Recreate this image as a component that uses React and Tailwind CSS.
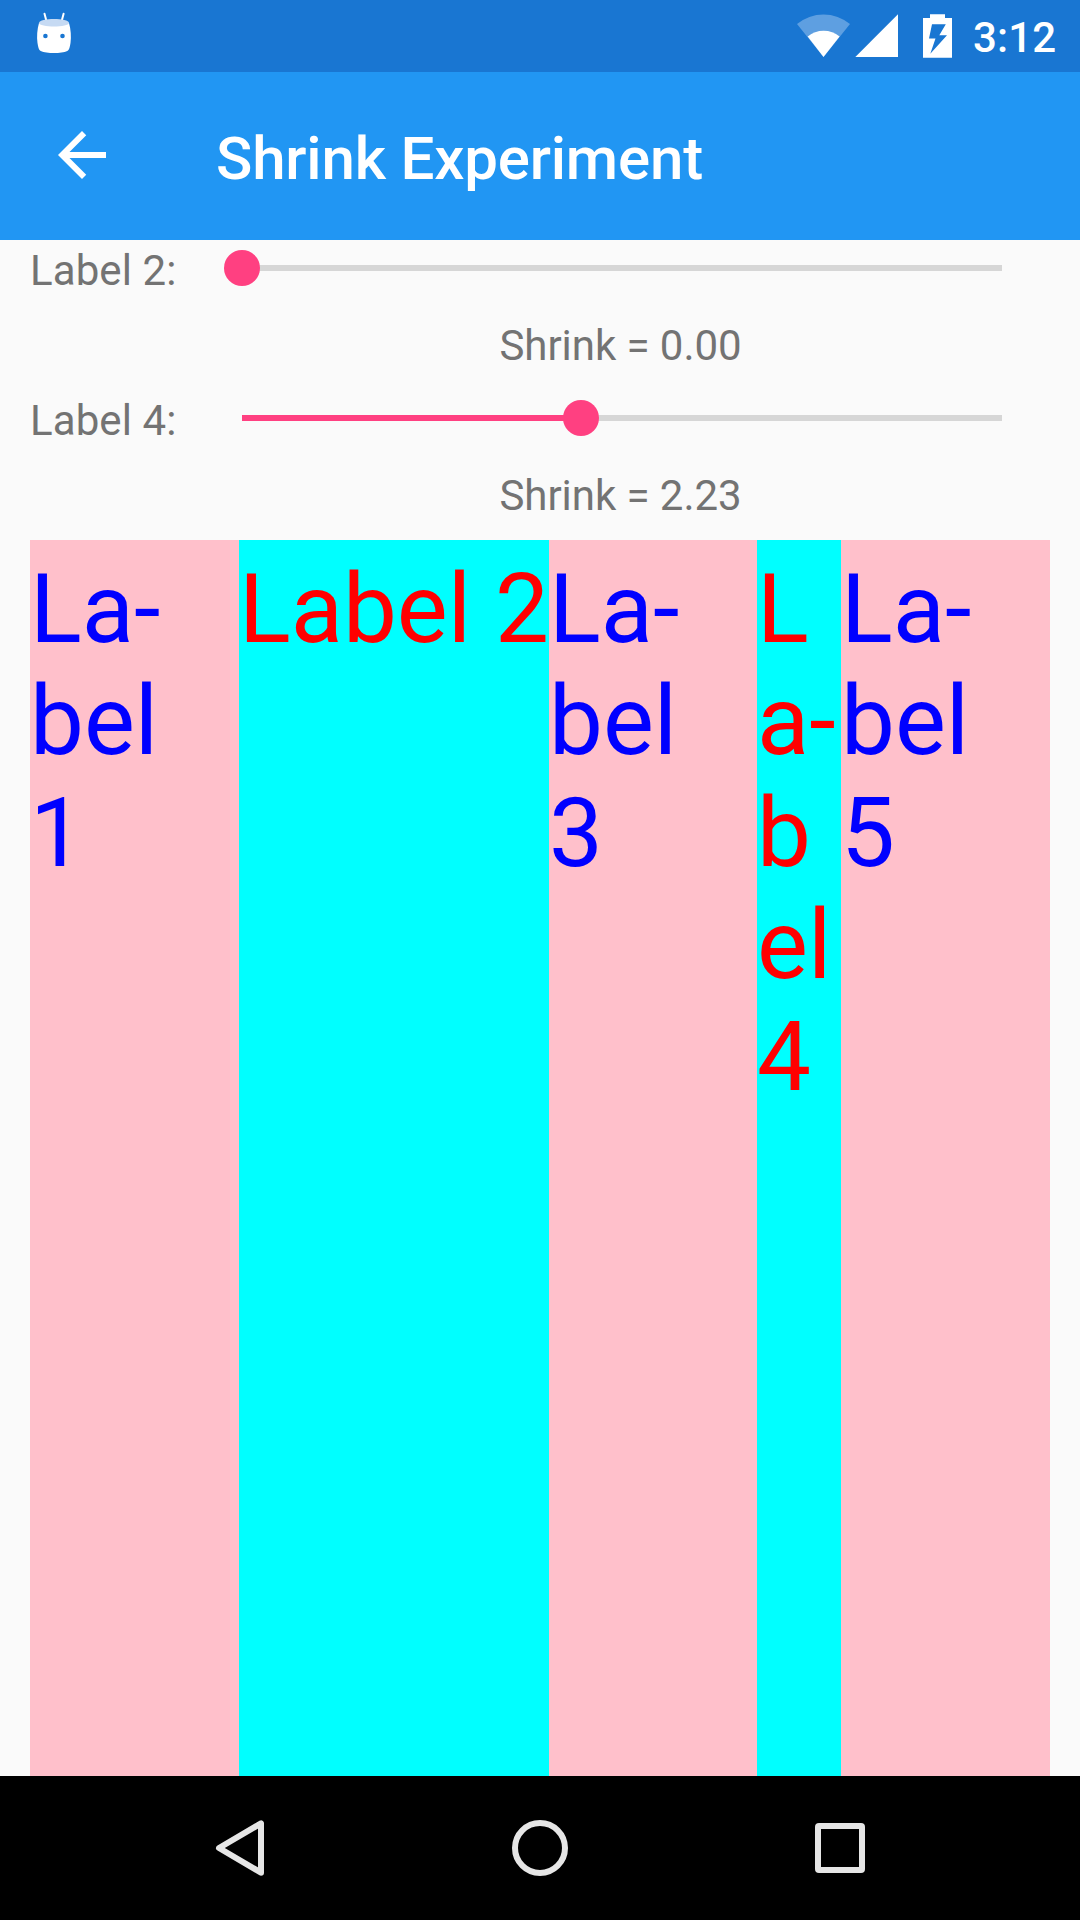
function StatusBar() {
  return (
    <div className="flex h-[72px] items-start justify-between bg-[#1976d2] pr-[27px]">
      <svg className="h-[72px] w-[108px]" viewBox="0 0 108 72" aria-hidden="true">
        <path d="M44.5 13.700l2 7.500M63.600 13.700l-2 7.500" stroke="#fff" strokeWidth="2" strokeLinecap="round" />
        <path
          d="M39 23C37.2 29 36.6 37 37.5 43c.6 4 1.3 7 3.2 8 6 2.700 20.600 2.700 26.600 0 1.900-1 2.600-4 3.200-8 .900-6 .300-14-1.500-20Z"
          fill="#fff"
        />
        <path d="M39 23c0-5.200 30-5.200 30 0 0 4.600-30 4.600-30 0Z" fill="#c6daf3" />
        <circle cx="45.4" cy="36" r="2.3" fill="#1976d2" />
        <circle cx="62.5" cy="36" r="2.3" fill="#1976d2" />
      </svg>
      <div className="flex">
        <svg className="h-[72px] w-[180px]" viewBox="790 0 180 72" aria-hidden="true">
          <path d="M797 24A41.700 41.700 0 0 1 850 24L823.500 57Z" fill="#5e9fe1" />
          <path d="M807.700 36.500A25.300 25.300 0 0 1 839.600 36.500L823.500 57Z" fill="#fff" />
          <path d="M898 14.300V57H855.300Z" fill="#fff" />
          <path d="M930 14.300h15V18h7v39.700h-29V18h7Z" fill="#fff" />
          <path d="M932 24.300h13.800l-6.500 11h7.700l-16.700 18.500 5.200-15.300h-6.500Z" fill="#1976d2" />
        </svg>
        <span className="w-[83px] pl-[3px] pt-[13px] text-[42px] font-medium leading-[50px] tracking-[0.15px] whitespace-nowrap">3:12</span>
      </div>
    </div>
  );
}

function AppBar() {
  return (
    <div className="flex h-[168px] items-center bg-[#2196f3]">
      <svg className="mb-[2px] ml-[46px] mr-[98px] h-[72px] w-[72px]" viewBox="0 0 24 24" fill="#fff" aria-hidden="true">
        <path d="M20 11H7.830l5.590-5.590L12 4l-8 8 8 8 1.410-1.410L7.830 13H20v-2z" />
      </svg>
      <h1 className="pt-[6px] text-[60px] font-medium leading-[70px] tracking-[-0.18px] whitespace-nowrap">Shrink Experiment</h1>
    </div>
  );
}

const MAX_SHRINK = 5;

function SliderRow({ label, value }) {
  const percent = `${(value / MAX_SHRINK) * 100}%`;
  return (
    <div className="grid h-[150px] grid-cols-[160px_1fr] grid-rows-2 text-[42px] leading-[50px] text-[#737373]">
      <span className="pt-[6px] tracking-[0.1px] whitespace-nowrap">{label}:</span>
      <div className="flex items-start pl-[52px] pr-[48px] pt-[25px]">
        <div className="relative h-[6px] w-full bg-[#d6d6d6]">
          <div className="h-full bg-[#ff4081]" style={{ width: percent }} />
          <div
            className="absolute -top-[15px] size-[36px] -translate-x-1/2 rounded-full bg-[#ff4081]"
            style={{ left: percent }}
          />
        </div>
      </div>
      <span className="col-start-2 pl-px pt-[6px] text-center tracking-[-0.05px] whitespace-nowrap">Shrink = {value.toFixed(2)}</span>
    </div>
  );
}

const PINK = "bg-[#ffc0cb] text-[#0000ff]";
const CYAN = "bg-[#00ffff] text-[#ff0000]";

const COLUMNS = [
  { tone: PINK, lines: ["La-", "bel", "1"] },
  { tone: CYAN, lines: ["Label 2"] },
  { tone: PINK, lines: ["La-", "bel", "3"] },
  { tone: CYAN, lines: ["L", "a-", "b", "el", "4"] },
  { tone: PINK, lines: ["La-", "bel", "5"] },
];

function NavBar() {
  return (
    <div className="grid h-[144px] grid-cols-3 place-items-center bg-black px-[90px]">
      <svg className="size-[72px]" viewBox="204 1812 72 72" fill="none" stroke="#e6e6e6" strokeWidth="6" strokeLinejoin="round" aria-hidden="true">
        <path d="M261 1823.300v49.400L219 1848Z" />
      </svg>
      <svg className="size-[72px]" viewBox="0 0 72 72" fill="none" stroke="#e6e6e6" strokeWidth="6" aria-hidden="true">
        <circle cx="36" cy="36" r="25" />
      </svg>
      <svg className="size-[72px]" viewBox="0 0 72 72" fill="#e6e6e6" aria-hidden="true">
        <rect x="11" y="11" width="50" height="50" rx="4" />
        <rect x="17" y="17" width="38" height="38" fill="#000" />
      </svg>
    </div>
  );
}

export default function App() {
  return (
    <div className="flex h-[1920px] w-[1080px] flex-col overflow-hidden bg-[#fafafa] font-['Roboto',sans-serif] text-white">
      <StatusBar />
      <AppBar />
      <main className="flex flex-1 flex-col px-[30px]">
        <SliderRow label="Label 2" value={0} />
        <SliderRow label="Label 4" value={2.23} />
        <div className="grid flex-1 grid-cols-[209px_310px_208px_84px_209px] text-[96px] leading-[112px]">
          {COLUMNS.map(({ tone, lines }, index) => (
            <div key={index} className={`pt-[13px] whitespace-nowrap ${tone}`}>
              {lines.map((line) => (
                <div key={line}>{line}</div>
              ))}
            </div>
          ))}
        </div>
      </main>
      <NavBar />
    </div>
  );
}
